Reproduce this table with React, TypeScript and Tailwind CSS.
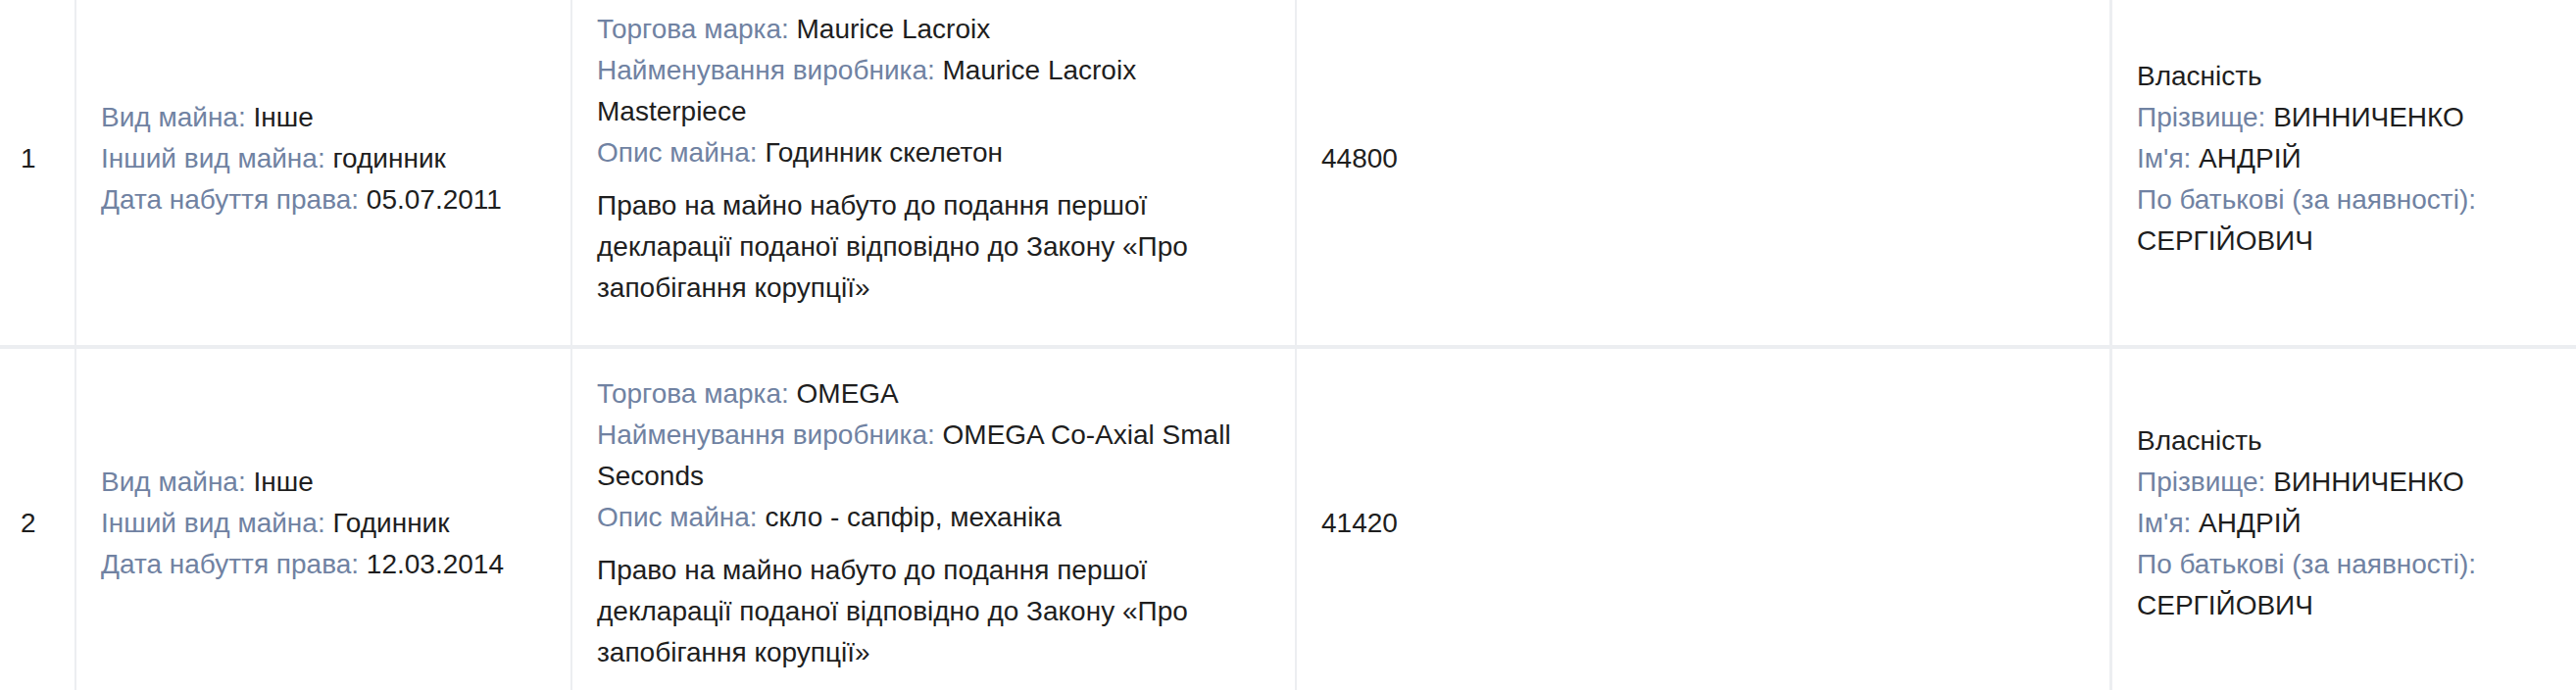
import clsx from "clsx";

interface Item {
  num: number;
  kind: string;
  otherKind: string;
  date: string;
  brand: string;
  maker: string;
  descr: string;
  price: string;
}

const items: Item[] = [
  {
    num: 1,
    kind: "Інше",
    otherKind: "годинник",
    date: "05.07.2011",
    brand: "Maurice Lacroix",
    maker: "Maurice Lacroix Masterpiece",
    descr: "Годинник скелетон",
    price: "44800",
  },
  {
    num: 2,
    kind: "Інше",
    otherKind: "Годинник",
    date: "12.03.2014",
    brand: "OMEGA",
    maker: "OMEGA Co-Axial Small Seconds",
    descr: "скло - сапфір, механіка",
    price: "41420",
  },
];


function Field({ label, value }: { label: string; value: string }) {
  return (
    <div>
      <span className="text-[#7082a2]">{label}: </span>
      {value}
    </div>
  );
}


function Row({ item, first }: { item: Item; first: boolean }) {
  const cell = clsx(
    "flex items-center px-[25px]",
    first ? "pt-[9px] pb-[37px]" : "pt-[25px] pb-[25px]"
  );

  return (
    <div className="grid grid-cols-[76px_506px_739px_831px_1fr] border-b-4 border-[#eceef1]">
      <div className={clsx(cell, "pl-[21px]")}>{item.num}</div>

      <div className={clsx(cell, "border-l-2 border-[#eceef1]")}>
        <div>
          <Field label="Вид майна" value={item.kind} />
          <Field label="Інший вид майна" value={item.otherKind} />
          <Field label="Дата набуття права" value={item.date} />
        </div>
      </div>

      <div className={clsx(cell, "border-l-2 border-[#eceef1]")}>
        <div>
          <Field label="Торгова марка" value={item.brand} />
          <Field label="Найменування виробника" value={item.maker} />
          <Field label="Опис майна" value={item.descr} />
          <p className="mt-[12px]">
            Право на майно набуто до подання першої декларації поданої відповідно до Закону «Про запобігання корупції»
          </p>
        </div>
      </div>

      <div className={clsx(cell, "border-l-2 border-[#eceef1]")}>{item.price}</div>

      <div className={clsx(cell, "border-l-[3px] border-[#eceef1]")}>
        <div>
          <div>Власність</div>
          <Field label="Прізвище" value="ВИННИЧЕНКО" />
          <Field label="Ім'я" value="АНДРІЙ" />
          <Field label="По батькові (за наявності)" value="СЕРГІЙОВИЧ" />
        </div>
      </div>
    </div>
  );
}


function App() {
  return (
    <main className="h-[704px] overflow-hidden bg-white font-['Liberation_Sans',Arial,sans-serif] text-[28px] leading-[42px] text-[#1e1e1e]">
      {items.map((item, i) => (
        <Row key={item.num} item={item} first={i === 0} />
      ))}
    </main>
  );
}

export default App;
